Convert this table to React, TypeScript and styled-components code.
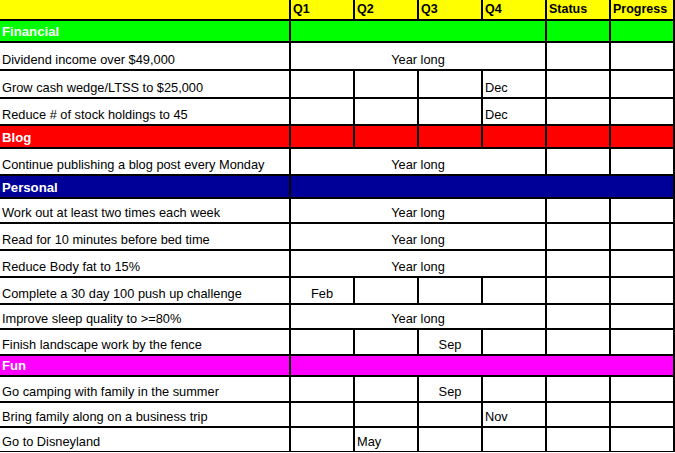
import React from "react";
import styled, { createGlobalStyle } from "styled-components";

const GlobalStyle = createGlobalStyle`
  html, body {
    margin: 0;
    padding: 0;
    background: #ffffff;
  }
  body {
    font-family: "Liberation Sans", Arial, sans-serif;
  }
`;

type Align = "left" | "center";

type Goal = {
  label: string;
  h: number;
  // "year" = Q1-Q4 merged, otherwise a quarter index with a month
  span?: "year";
  q?: number;
  month?: string;
  align?: Align;
};

type Section = {
  title: string;
  color: string;
  h: number;
  kind: "split" | "all" | "wide";
  goals: Goal[];
};

const sections: Section[] = [
  {
    title: "Financial",
    color: "#00ff00",
    h: 20,
    kind: "split",
    goals: [
      { label: "Dividend income over $49,000", h: 26, span: "year" },
      { label: "Grow cash wedge/LTSS to $25,000", h: 26, q: 3, month: "Dec", align: "left" },
      { label: "Reduce # of stock holdings to 45", h: 25, q: 3, month: "Dec", align: "left" },
    ],
  },
  {
    title: "Blog",
    color: "#ff0000",
    h: 21,
    kind: "all",
    goals: [{ label: "Continue publishing a blog post every Monday", h: 25, span: "year" }],
  },
  {
    title: "Personal",
    color: "#000099",
    h: 21,
    kind: "wide",
    goals: [
      { label: "Work out at least two times each week", h: 23, span: "year" },
      { label: "Read for 10 minutes before bed time", h: 25, span: "year" },
      { label: "Reduce Body fat to 15%", h: 25, span: "year" },
      { label: "Complete a 30 day 100 push up challenge", h: 25, q: 0, month: "Feb", align: "center" },
      { label: "Improve sleep quality to >=80%", h: 23, span: "year" },
      { label: "Finish landscape work by the fence", h: 24, q: 2, month: "Sep", align: "center" },
    ],
  },
  {
    title: "Fun",
    color: "#ff00ff",
    h: 19,
    kind: "wide",
    goals: [
      { label: "Go camping with family in the summer", h: 24, q: 2, month: "Sep", align: "center" },
      { label: "Bring family along on a business trip", h: 23, q: 3, month: "Nov", align: "left" },
      { label: "Go to Disneyland", h: 23, q: 1, month: "May", align: "left" },
    ],
  },
];

const Sheet = styled.div`
  display: flex;
  flex-direction: column;
  gap: 2px;
  width: 673px;
  padding: 0 2px 1px 0;
  background: #000000;
`;

const Row = styled.div<{ $h: number }>`
  display: grid;
  grid-template-columns: 289px repeat(6, 62px);
  column-gap: 2px;
  height: ${(p) => p.$h}px;
`;

const Cell = styled.div<{ $bg?: string; $span?: number; $align?: Align }>`
  grid-column: span ${(p) => p.$span ?? 1};
  background: ${(p) => p.$bg ?? "#ffffff"};
  display: flex;
  align-items: flex-end;
  justify-content: ${(p) => (p.$align === "center" ? "center" : "flex-start")};
  padding: 0 2px 2px 2px;
  box-sizing: border-box;
  overflow: hidden;
  white-space: nowrap;
  font-size: 12.8px;
  line-height: 15px;
  color: #000000;
`;

const HeadCell = styled(Cell)`
  font-size: 12.5px;
  font-weight: bold;
`;

const TitleCell = styled(Cell)`
  font-size: 13.2px;
  font-weight: bold;
  color: #ffffff;
`;

const quarters = ["Q1", "Q2", "Q3", "Q4"];

function SectionRow({ s }: { s: Section }) {
  return (
    <Row $h={s.h}>
      <TitleCell $bg={s.color}>{s.title}</TitleCell>
      {s.kind === "wide" && <Cell $bg={s.color} $span={6} />}
      {s.kind === "split" && (
        <>
          <Cell $bg={s.color} $span={4} />
          <Cell $bg={s.color} />
          <Cell $bg={s.color} />
        </>
      )}
      {s.kind === "all" &&
        [0, 1, 2, 3, 4, 5].map((i) => <Cell key={i} $bg={s.color} />)}
    </Row>
  );
}

function GoalRow({ g }: { g: Goal }) {
  return (
    <Row $h={g.h}>
      <Cell>{g.label}</Cell>
      {g.span === "year" ? (
        <Cell $span={4} $align="center">
          Year long
        </Cell>
      ) : (
        quarters.map((_, i) => (
          <Cell key={i} $align={i === g.q ? g.align : "left"}>
            {i === g.q ? g.month : null}
          </Cell>
        ))
      )}
      <Cell />
      <Cell />
    </Row>
  );
}

export default function App() {
  return (
    <>
      <GlobalStyle />
      <Sheet>
        <Row $h={19}>
          <HeadCell $bg="#ffff00" />
          {quarters.map((q) => (
            <HeadCell key={q} $bg="#ffff00">
              {q}
            </HeadCell>
          ))}
          <HeadCell $bg="#ffff00">Status</HeadCell>
          <HeadCell $bg="#ffff00">Progress</HeadCell>
        </Row>
        {sections.map((s) => (
          <React.Fragment key={s.title}>
            <SectionRow s={s} />
            {s.goals.map((g) => (
              <GoalRow key={g.label} g={g} />
            ))}
          </React.Fragment>
        ))}
      </Sheet>
    </>
  );
}
